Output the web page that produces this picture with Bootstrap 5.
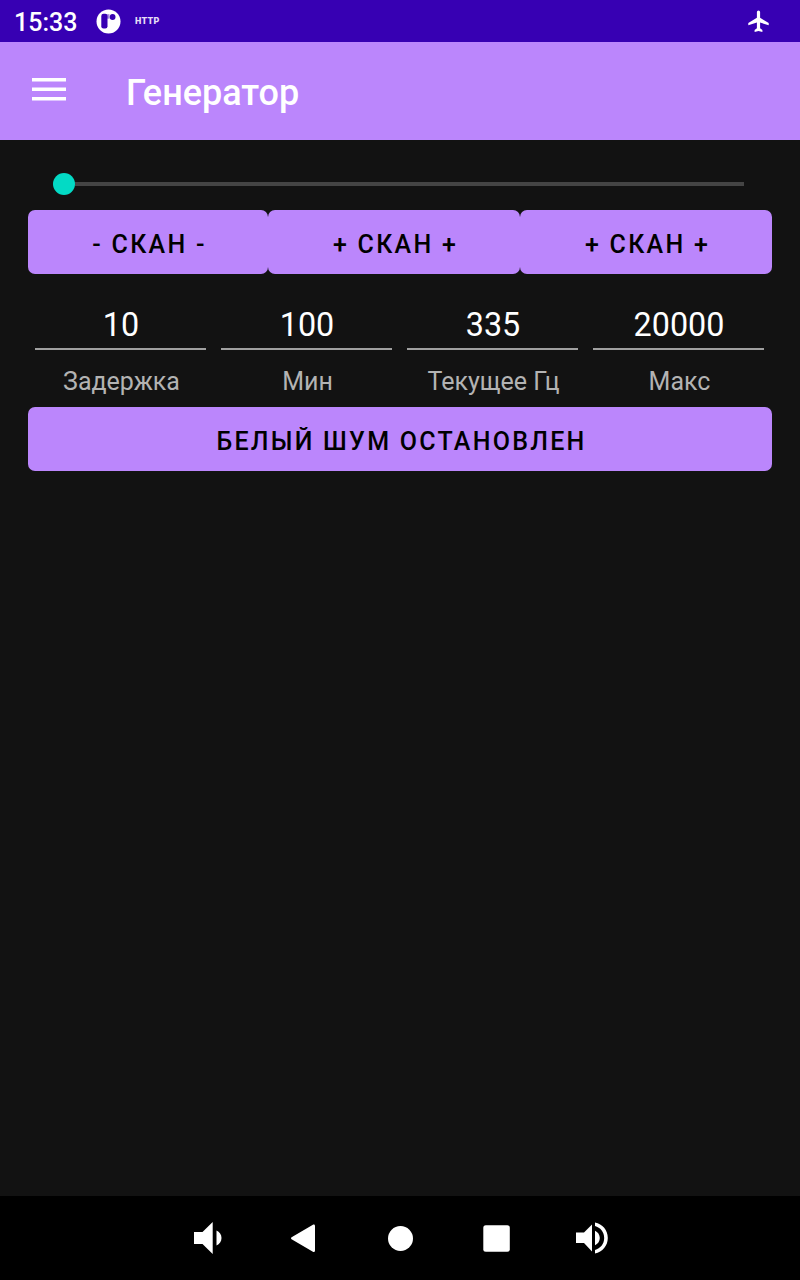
<!DOCTYPE html>
<html lang="ru" data-bs-theme="dark">
<head>
<meta charset="utf-8">
<meta name="viewport" content="width=device-width, initial-scale=1">
<title>Генератор</title>
<link href="https://cdn.jsdelivr.net/npm/bootstrap@5.3.0/dist/css/bootstrap.min.css" rel="stylesheet">
<style>
  body { font-family: Roboto, "Noto Sans", sans-serif; background: #121212; color: #fff; height: 1280px; overflow: hidden; }
  svg { display: block; flex: none; }
  .status-bar { height: 42px; background: #3700b3; padding: 0 30px 0 14px; }
  .clock { font-size: 25px; font-weight: 500; line-height: 42px; width: 82px; padding-top: 3px; }
  .http-tag { font-size: 9px; font-weight: 900; line-height: 42px; margin-left: 14px; letter-spacing: .3px; color: #e4dbf6; }
  .app-bar { height: 98px; background: #bb86fc; padding: 0 28px; }
  .app-title { font-size: 36px; font-weight: 500; line-height: 42px; margin-left: 56px; padding-top: 4px; }
  .menu-btn { width: 42px; height: 42px; }
  .screen { padding: 22px 28px 0; }
  .seek { height: 44px; margin: 0 28px 4px 25px; }
  .seek-thumb { width: 22px; height: 22px; background: #03dac5; flex: none; }
  .seek-track { height: 4px; background: #444; }
  .btn-gen { --bs-btn-bg: #bb86fc; --bs-btn-color: #000; --bs-btn-hover-bg: #c79bfd; --bs-btn-hover-color: #000;
    --bs-btn-border-width: 0; --bs-btn-border-radius: 7px; --bs-btn-padding-y: 0; --bs-btn-padding-x: 0;
    height: 64px; font-size: 25px; font-weight: 500; line-height: 64px; letter-spacing: 2.27px; padding: 3px 0 0 3px; }
  .scan-row { display: grid; grid-template-columns: 240px 252px 252px; }
  .values { margin-top: 27px; }
  .field { width: 186px; padding: 0 8px 0 7px; }
  .field-input { height: 49px; padding: 0 0 0 1px; border: 0; border-bottom: 2px solid #a0a0a0; border-radius: 0; background: transparent; color: #fff;
    font-size: 32.3px; line-height: 46px; text-align: center; }
  .field-label { display: block; text-align: center; font-size: 25px; line-height: 32px; height: 57px; padding: 16px 0 0 2px; color: #b3b3b3; white-space: nowrap; }
  .nav-keys { height: 84px; background: #000; }
  .nav-key { width: 96px; height: 84px; }
</style>
</head>
<body class="d-flex flex-column">
<header>
  <div class="status-bar d-flex align-items-center">
    <span class="clock">15:33</span>
    <svg width="25" height="25" viewBox="0 0 25 25"><circle cx="12.500" cy="12.500" r="12" fill="#fff"/><rect x="5.300" y="4.800" width="6.200" height="14.700" rx="2.200" fill="#3700b3"/><path d="M11 5.200h2.500v4.500H11z" fill="#3700b3" opacity=".45"/><circle cx="16.600" cy="8" r="2.900" fill="#3700b3"/></svg>
    <span class="http-tag">HTTP</span>
    <svg class="ms-auto" width="24" height="24" viewBox="0 0 24 24" fill="#fff"><path d="M22.700 16.300v-2.200l-8.600-5.300V3.100a1.600 1.600 0 0 0-3.200 0v5.700l-8.600 5.300v2.200l8.600-2.700v5.700l-2.300 1.600V23l3.900-1.100 3.900 1.100v-2.100l-2.300-1.600v-5.700z"/></svg>
  </div>
  <nav class="app-bar d-flex align-items-center">
    <button class="menu-btn btn p-0 border-0" aria-label="Меню"><svg width="42" height="42" viewBox="0 0 42 42" fill="#fff"><path d="M4 8h34v3.600H4zM4 17.500h34v3.600H4zM4 27h34v3.600H4z"/></svg></button>
    <h1 class="app-title mb-0">Генератор</h1>
  </nav>
</header>
<main class="screen flex-grow-1">
  <div class="seek d-flex align-items-center">
    <div class="seek-thumb rounded-circle"></div>
    <div class="seek-track flex-grow-1"></div>
  </div>
  <div class="scan-row">
    <button class="btn btn-gen">- СКАН -</button>
    <button class="btn btn-gen">+ СКАН +</button>
    <button class="btn btn-gen">+ СКАН +</button>
  </div>
  <div class="values d-flex">
    <div class="field"><input class="form-control field-input" id="delay" value="10"><label class="field-label" for="delay">Задержка</label></div>
    <div class="field"><input class="form-control field-input" id="min" value="100"><label class="field-label" for="min">Мин</label></div>
    <div class="field"><input class="form-control field-input" id="freq" value="335"><label class="field-label" for="freq">Текущее Гц</label></div>
    <div class="field"><input class="form-control field-input" id="max" value="20000"><label class="field-label" for="max">Макс</label></div>
  </div>
  <button class="btn btn-gen w-100">БЕЛЫЙ ШУМ ОСТАНОВЛЕН</button>
</main>
<footer class="nav-keys d-flex justify-content-center">
  <div class="nav-key d-flex align-items-center justify-content-center"><svg width="42" height="42" viewBox="0 0 42 42" fill="#fff"><path d="M7 15h8.500L25.700 5v32L15.500 27H7zM29.500 13.500c3 1.200 5 4 5 7.500s-2 6.300-5 7.500z"/></svg></div>
  <div class="nav-key d-flex align-items-center justify-content-center"><svg width="42" height="42" viewBox="0 0 42 42" fill="#fff"><path d="M9 20 29.500 8c1.500-1 2.500-.4 2.500 1v24.500c0 1.400-1 2-2.500 1L9 22.500c-1.300-.8-1.300-1.700 0-2.500z"/></svg></div>
  <div class="nav-key d-flex align-items-center justify-content-center"><svg width="42" height="42" viewBox="0 0 42 42" fill="#fff"><circle cx="21.500" cy="21.500" r="12.500"/></svg></div>
  <div class="nav-key d-flex align-items-center justify-content-center"><svg width="42" height="42" viewBox="0 0 42 42" fill="#fff"><rect x="8.300" y="8.300" width="26.500" height="26.500" rx="2.500"/></svg></div>
  <div class="nav-key d-flex align-items-center justify-content-center"><svg width="42" height="42" viewBox="0 0 42 42" fill="#fff"><path d="M5 15.500h8L21 7.500v27L13 26H5zM24 13.700c2.800 1.200 4.800 4 4.800 7.300s-2 6.100-4.800 7.300zM24 5.500c7.500 1.500 12.800 7.700 12.800 15.400S31.500 34.800 24 36.400v-3.500c5.300-1.400 9.200-6.200 9.200-12S29.300 10.400 24 9z"/></svg></div>
</footer>
<script src="https://cdn.jsdelivr.net/npm/bootstrap@5.3.0/dist/js/bootstrap.bundle.min.js"></script>
</body>
</html>
